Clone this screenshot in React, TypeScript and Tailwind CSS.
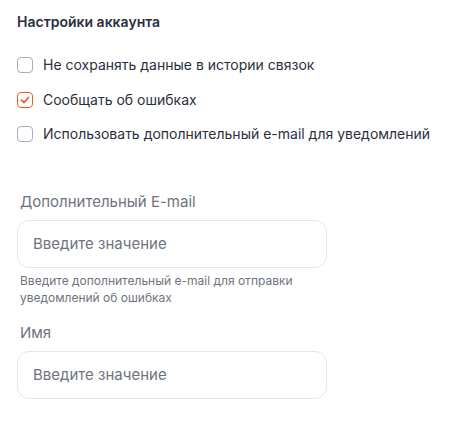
import React from "react";

function Box({ checked }: { checked?: boolean }) {
  if (checked) {
    return (
      <span className="flex h-4 w-4 shrink-0 items-center justify-center rounded-[4px] border border-[#f05a2a] bg-white">
        <svg width="10" height="10" viewBox="0 0 10 10" fill="none">
          <path d="M1.5 5.2 L4 7.5 L8.5 2.5" stroke="#f05a2a" strokeWidth="1.8" strokeLinecap="round" strokeLinejoin="round" />
        </svg>
      </span>
    );
  }
  return <span className="h-4 w-4 shrink-0 rounded-[4px] border border-[#a9adbd] bg-white" />;
}

function Row({ text, checked }: { text: string; checked?: boolean }) {
  return (
    <label className="flex items-center gap-[10px] h-[18px]">
      <Box checked={checked} />
      <span className="whitespace-nowrap text-[14px] text-[#2b2f3d] leading-[18px]">{text}</span>
    </label>
  );
}

function Field({ label, helper }: { label: string; helper?: string }) {
  return (
    <div className="flex flex-col">
      <div className="pl-[3px] text-[15px] leading-[18px] text-[#6f7380]">{label}</div>
      <div className="mt-[9px] flex h-[48px] w-[310px] items-center rounded-[12px] border border-[#e6e7eb] px-[15px]">
        <span className="text-[15px] text-[#6f7380]">Введите значение</span>
      </div>
      {helper && (
        <div className="mt-[4px] w-[300px] pl-[3px] text-[12px] leading-[17px] text-[#6f7380]">{helper}</div>
      )}
    </div>
  );
}

export default function App() {
  return (
    <div className="min-h-[423px] w-[463px] bg-white px-[17px] pt-[13px]" style={{ fontFamily: "Inter, 'Noto Sans', sans-serif" }}>
      <div className="text-[14px] font-semibold leading-[18px] text-[#2b2f3d]">Настройки аккаунта</div>
      <div className="mt-[25px] flex flex-col gap-[16.5px]">
        <Row text="Не сохранять данные в истории связок" />
        <Row text="Сообщать об ошибках" checked />
        <Row text="Использовать дополнительный e-mail для уведомлений" />
      </div>
      <div className="mt-[50px] flex flex-col gap-[18px]">
        <Field label="Дополнительный E-mail" helper="Введите дополнительный e-mail для отправки уведомлений об ошибках" />
        <Field label="Имя" />
      </div>
    </div>
  );
}
